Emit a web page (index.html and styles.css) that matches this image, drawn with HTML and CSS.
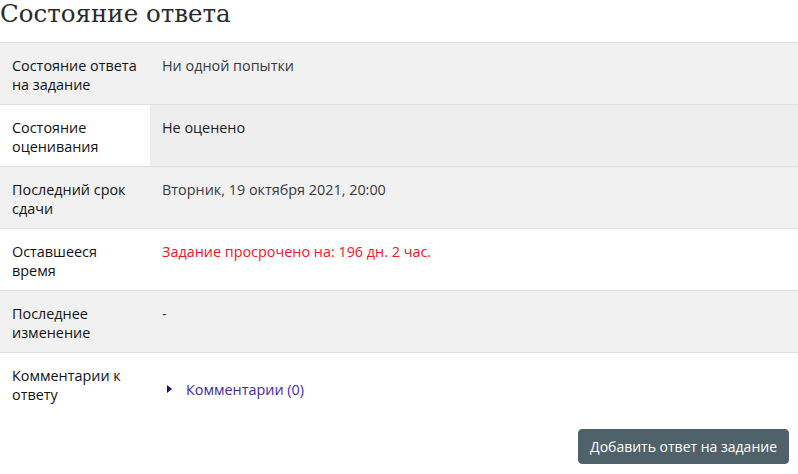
FILE: index.html
```html
<!DOCTYPE html>
<html lang="ru">
<head>
<meta charset="utf-8">
<link rel="stylesheet" href="styles.css">
</head>
<body>
<h2 class="title">Состояние ответа</h2>
<div class="status">
  <div class="row shade">
    <div class="label">Состояние ответа на задание</div>
    <div class="value">Ни одной попытки</div>
  </div>
  <div class="row">
    <div class="label">Состояние оценивания</div>
    <div class="value graded">Не оценено</div>
  </div>
  <div class="row shade">
    <div class="label">Последний срок сдачи</div>
    <div class="value">Вторник, 19 октября 2021, 20:00</div>
  </div>
  <div class="row">
    <div class="label">Оставшееся время</div>
    <div class="value overdue">Задание просрочено на: 196 дн. 2 час.</div>
  </div>
  <div class="row shade">
    <div class="label">Последнее изменение</div>
    <div class="value">-</div>
  </div>
  <div class="row last">
    <div class="label">Комментарии к ответу</div>
    <div class="value comments"><span class="tri"></span><a href="#" class="link">Комментарии (0)</a></div>
  </div>
</div>
<div class="actions">
  <button class="btn">Добавить ответ на задание</button>
</div>
</body>
</html>
```
FILE: styles.css
```css
html, body {
  margin: 0;
  padding: 0;
  background: #fff;
}
body {
  font-family: "Open Sans", "Liberation Sans", sans-serif;
  font-size: 14.4px;
  color: #373a3c;
}
.title {
  font-family: "DejaVu Serif", serif;
  font-weight: normal;
  font-size: 24.5px;
  color: #2b2b2b;
  margin: 0;
  height: 42px;
  line-height: 28px;
}
.status {
  border-top: 1px solid #dedede;
}
.row {
  display: flex;
  height: 61px;
  border-bottom: 1px solid #dedede;
  background: #fff;
}
.row.shade {
  background: #f1f1f1;
}
.row.last {
  border-bottom: none;
  height: 62px;
}
.label {
  width: 150px;
  box-sizing: border-box;
  padding: 12.5px 12px 0 12px;
  color: #111315;
  line-height: 19px;
}
.value {
  flex: 1;
  padding: 12.5px 12px 0 12px;
  line-height: 19px;
}
.value.graded {
  background: #eeeeee;
  color: #1d2125;
}
.value.overdue {
  color: #f5142a;
}
.value.comments {
  display: flex;
  align-items: flex-start;
  padding-top: 26.5px;
}
.tri {
  width: 0;
  height: 0;
  border-top: 4px solid transparent;
  border-bottom: 4px solid transparent;
  border-left: 5px solid #0b0b85;
  margin: 5.5px 14px 0 5px;
}
.link {
  color: #3f2aa8;
  text-decoration: none;
}
.actions {
  display: flex;
  justify-content: flex-end;
  padding: 14px 9px 0 0;
}
.btn {
  font-family: "Open Sans", "Liberation Sans", sans-serif;
  font-size: 14px;
  color: #fff;
  background: #4f6269;
  border: 1px solid #4f6269;
  border-radius: 4px;
  padding: 0 11px;
  height: 35px;
  line-height: 33px;
}
```
